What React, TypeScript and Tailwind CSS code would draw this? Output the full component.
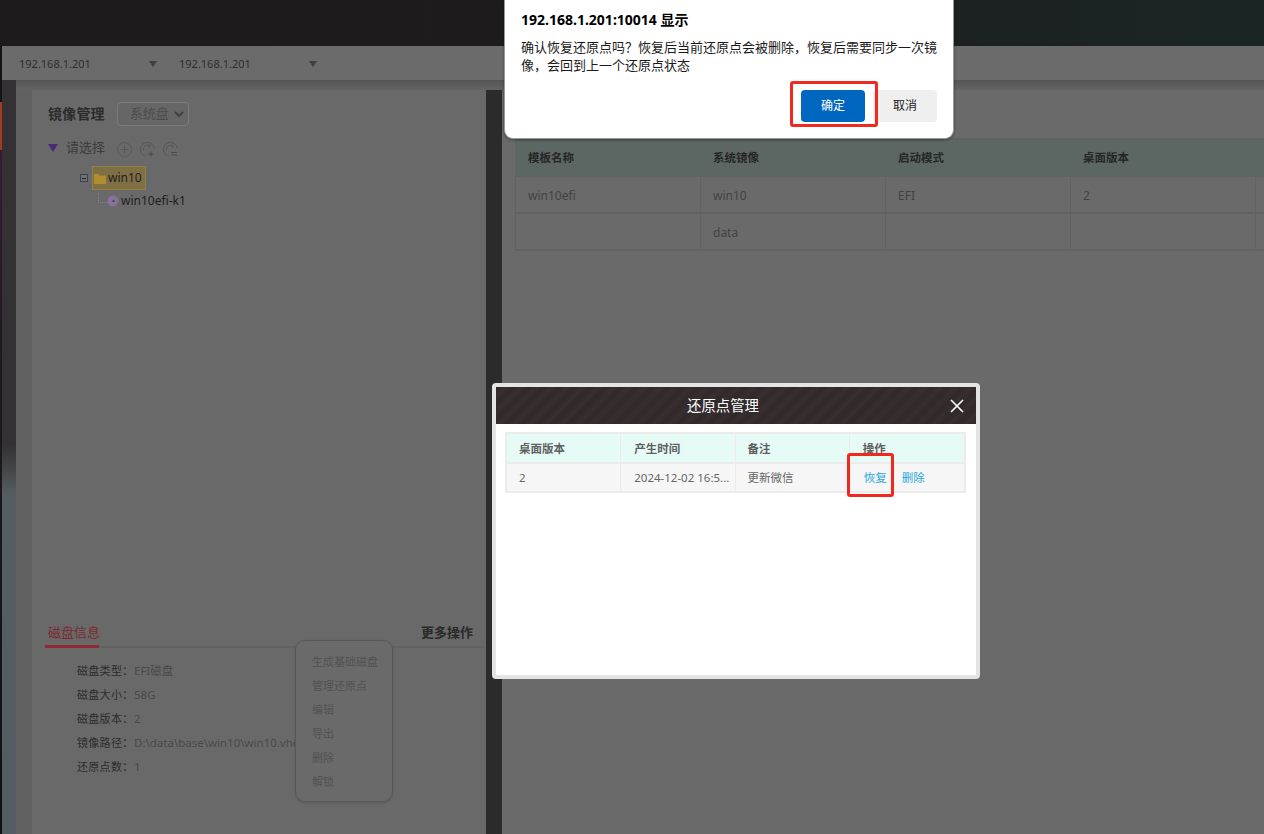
import React from 'react';

const cjk = "font-['Noto_Sans','Noto_Sans_CJK_SC',sans-serif]";

const CircleIcon = ({ kind }: { kind: 'plus' | 'addcopy' | 'sync' }) => (
  <svg width="15" height="15" viewBox="0 0 15 15" fill="none" stroke="#585858" strokeWidth="1">
    {kind === 'plus' ? (
      <>
        <circle cx="7.500" cy="7.500" r="7" />
        <path d="M7.500 3.500v8M3.500 7.500h8" />
      </>
    ) : (
      <>
        <path d="M14.300 6.500A7 7 0 1 0 5.500 14.200" />
        <path d="M9 3.500A4.300 4.300 0 0 0 3.500 8.500" />
        <path d="M9 2.500l1.500 2-2.300 1" />
        {kind === 'addcopy' ? (
          <path d="M11 9.500v5M8.500 12h5" stroke="#4a4a4a" />
        ) : (
          <path d="M8 10.500h6M8 13h6" stroke="#4a4a4a" />
        )}
      </>
    )}
  </svg>
);

const FolderIcon = () => (
  <svg width="12" height="11" viewBox="0 0 12 11" className="shrink-0">
    <path d="M0 1h4.500l1 1.500H12V11H0z" fill="#b08c30" />
  </svg>
);

const DiskIcon = () => (
  <svg width="12" height="12" viewBox="0 0 12 12" className="shrink-0">
    <circle cx="6" cy="6" r="5.500" fill="#8a6fa0" />
    <path d="M6 .5A5.500 5.500 0 0 1 11.500 6H6z" fill="#7f7590" />
    <circle cx="6.500" cy="6" r="2.600" fill="#807c8c" />
    <circle cx="6.500" cy="6" r="1.200" fill="#4a4a4a" />
  </svg>
);

const infoRows = [
  ['磁盘类型：', 'EFI磁盘'],
  ['磁盘大小：', '58G'],
  ['磁盘版本：', '2'],
  ['镜像路径：', 'D:\\data\\base\\win10\\win10.vhd'],
  ['还原点数：', '1'],
];

const menuItems = ['生成基础磁盘', '管理还原点', '编辑', '导出', '删除', '解锁'];

const LeftPanel = () => (
  <div className="w-[454px] bg-[#696969] flex flex-col">
    <div className="flex items-center h-[24px] mt-3 pl-4">
      <span className="text-[14px] tracking-[0.2px] font-bold text-[#2c2c2c] leading-none">镜像管理</span>
      <div className="ml-3 w-[72px] h-[24px] border border-[#7c7c7c] rounded-sm bg-[#666666] flex items-center pl-3 gap-[5px]">
        <span className="text-[13px] text-[#4c4c4c]">系统盘</span>
        <svg width="10" height="6" viewBox="0 0 10 6" fill="none" stroke="#3f3f3f" strokeWidth="1.800">
          <path d="M1 1l4 4 4-4" />
        </svg>
      </div>
    </div>
    <div className="flex items-center h-[24px] mt-[10px] pl-4">
      <span className="w-0 h-0 border-x-[5.500px] border-x-transparent border-t-[8px] border-t-[#4a2a78]" />
      <span className="ml-[8px] text-[13px] text-[#3c3c3c]">请选择</span>
      <div className="flex items-center gap-[8px] ml-[12px] mt-[2px]">
        <CircleIcon kind="plus" />
        <CircleIcon kind="addcopy" />
        <CircleIcon kind="sync" />
      </div>
    </div>
    <div className="flex items-center h-[24px] mt-[6px] pl-[48px]">
      <span className="w-[8px] h-[8px] border border-[#39424f] bg-[#6f7278] flex items-center justify-center">
        <span className="block w-[4px] h-px bg-[#222222]" />
      </span>
      <div className="ml-[4px] w-[54px] h-[24px] bg-[#7f6f45] border border-[#96803f] flex items-center gap-[2px] pl-[1px]">
        <FolderIcon />
        <span className="text-[12px] text-[#1e1e1e]">win10</span>
      </div>
    </div>
    <div className="flex items-center h-[22px] pl-[66px]">
      <span className="w-[9px] h-[10px] border-l border-b border-dotted border-[#808080] mb-[6px]" />
      <DiskIcon />
      <span className="ml-[2px] text-[12px] text-[#1e1e1e]">win10efi-k1</span>
    </div>

    <div className="mt-auto h-[214px] relative">
      <div className="flex justify-between items-start h-[28px] border-b-[2px] border-[#626262] ml-[13px] mr-[2px]">
        <span className="relative w-[54px] h-[26px] pl-[3px] text-[13px] text-[#7d2a32] leading-[24px] whitespace-nowrap">
          磁盘信息
          <span className="absolute left-0 right-0 -bottom-[2px] h-[3px] bg-[#8d2a35]" />
        </span>
        <span className="text-[13px] font-bold text-[#2a2a2a] leading-[24px] mr-[11px]">更多操作</span>
      </div>
      <div className="flex flex-col pl-[45px] pt-[11px]">
        {infoRows.map(([label, value]) => (
          <div key={label} className="flex items-center h-[24px]">
            <span className="w-[57px] shrink-0 text-[11px] tracking-[0.3px] text-[#2c2c2c] whitespace-nowrap">{label}</span>
            <span className="text-[11.500px] text-[#494949] whitespace-nowrap">{value}</span>
          </div>
        ))}
      </div>
      <div className="absolute left-[263px] top-[20px] w-[98px] h-[162px] rounded-[10px] border border-[#585858] bg-[#6a6a6a] pl-[16px] pt-[9px] shadow-sm">
        {menuItems.map((item) => (
          <div key={item} className="h-[24px] flex items-center text-[11px] text-[#525252] whitespace-nowrap">
            {item}
          </div>
        ))}
      </div>
    </div>
  </div>
);

const templateRows = [
  ['win10efi', 'win10', 'EFI', '2'],
  ['', 'data', '', ''],
];

const RightPanel = () => (
  <div className="flex-1 bg-[#6a6a6a] pl-[13px] pt-[48px]">
    <div className="border-t border-[#626262]">
      <div className="flex h-[38px] bg-[#5c6663] border-b border-[#626262] text-[11.500px] font-bold text-[#262626]">
        {['模板名称', '系统镜像', '启动模式', '桌面版本'].map((head) => (
          <div key={head} className="w-[185px] shrink-0 pl-[13px] flex items-center">
            {head}
          </div>
        ))}
      </div>
      {templateRows.map((row, i) => (
        <div key={i} className="flex h-[37px] border-b-[2px] border-[#626262] border-l text-[12px] text-[#424242]">
          {row.map((cell, j) => (
            <div key={j} className="w-[185px] shrink-0 pl-[12px] pt-[2px] flex items-center border-r border-[#626262]">
              {cell}
            </div>
          ))}
        </div>
      ))}
    </div>
  </div>
);

const RestoreModal = () => (
  <div className="absolute left-[492px] top-[383px] w-[488px] h-[296px] bg-white border-4 border-[#e4e4e4] rounded-[4px] overflow-hidden">
    <div className="h-[37px] flex items-center justify-center relative pr-[26px] bg-[#332b2d] bg-[repeating-linear-gradient(135deg,#302829_0px,#342b2d_4px,#372e30_6px,#312a2b_11px)]">
      <span className="text-[14.400px] text-white">还原点管理</span>
      <svg className="absolute right-[12px] top-[12px]" width="14" height="14" viewBox="0 0 14 14" stroke="#ffffff" strokeWidth="1.700">
        <path d="M1 1l12 12M13 1L1 13" />
      </svg>
    </div>
    <div className="ml-[9px] w-[461px] mt-[8px] border-2 border-[#ebebeb]">
      <div className="flex h-[30px] border-b-[2px] border-[#ebebeb] bg-[#e6fbf6] text-[11.500px] font-bold text-[#5f5f5f]">
        <div className="w-[115px] pl-[12px] pt-[1px] flex items-center border-r border-[#ebebeb]">桌面版本</div>
        <div className="w-[115px] pl-[13px] pt-[1px] flex items-center border-r border-[#ebebeb]">产生时间</div>
        <div className="w-[115px] pl-[12px] pt-[1px] flex items-center border-r border-[#ebebeb]">备注</div>
        <div className="w-[115px] pl-[13px] pt-[1px] flex items-center">操作</div>
      </div>
      <div className="flex h-[27px] bg-[#f6f6f6] text-[11.500px] text-[#666666]">
        <div className="w-[115px] pl-[12px] flex items-center border-r border-[#ebebeb]">2</div>
        <div className="w-[115px] pl-[13px] flex items-center border-r border-[#ebebeb] whitespace-nowrap overflow-hidden">2024-12-02 16:5...</div>
        <div className="w-[115px] pl-[12px] flex items-center border-r border-[#ebebeb]">更新微信</div>
        <div className="w-[115px] pl-[14px] flex items-center gap-[15px] text-[#1fa8dc]">
          <span>恢复</span>
          <span>删除</span>
        </div>
      </div>
    </div>
  </div>
);

const ConfirmDialog = () => (
  <div className="absolute left-[504px] top-0 w-[450px] h-[139px] bg-white rounded-b-[9px] border-x border-b border-[#9a9a9a] shadow-[0_1px_3px_rgba(0,0,0,0.4)] pt-[10px] px-[16px] flex flex-col">
    <div className="text-[14px] font-bold text-black leading-[20px]">192.168.1.201:10014 显示</div>
    <div className="mt-[8px] text-[13px] text-[#1a1a1a] leading-[18px]">
      确认恢复还原点吗？恢复后当前还原点会被删除，恢复后需要同步一次镜像，会回到上一个还原点状态
    </div>
    <div className="flex justify-end gap-[8px] mt-[16px]">
      <button className="w-[64px] h-[32px] bg-[#0067c0] rounded-[4px] text-[12px] text-white">确定</button>
      <button className="w-[64px] h-[32px] bg-[#efefef] rounded-[4px] text-[12px] text-[#1a1a1a]">取消</button>
    </div>
  </div>
);

const ServerSelect = () => (
  <div className="w-[160px] pl-[17px] pr-[5px] pt-[2px] flex items-center justify-between">
    <span>192.168.1.201</span>
    <span className="w-0 h-0 border-x-[4px] border-x-transparent border-t-[6px] border-t-[#404040]" />
  </div>
);

const App = () => (
  <div className={`relative w-[1264px] h-[834px] overflow-hidden bg-[#6a6a6a] ${cjk}`}>
    <div className="h-[46px] bg-gradient-to-r from-[#1f1b1c] via-[#1d1c1d] to-[#1b2526]" />
    <div className="flex h-[34px]">
      <div className="w-[2px] bg-[#141416]" />
      <div className="flex-1 bg-[#6b6b6b] flex items-center text-[11px] text-[#2e2e2e]">
        <ServerSelect />
        <ServerSelect />
      </div>
    </div>
    <div className="flex h-[754px]">
      <div className="w-[2px] bg-[linear-gradient(to_bottom,#141416_0,#141416_22px,#a33a22_22px,#a33a22_70px,#3a1a30_70px,#1a1a20_294px,#111114_100%)]" />
      <div className="w-[14px] bg-[linear-gradient(to_bottom,#333133_0,#333133_365px,#565d62_415px,#565d62_100%)]" />
      <div className="flex-1 flex flex-col">
        <div className="h-[10px] bg-gradient-to-b from-[#555555] to-[#646464]" />
        <div className="flex-1 flex">
          <div className="w-[16px] bg-[#616161]" />
          <LeftPanel />
          <div className="w-[16px] bg-[#2b2b2b]" />
          <RightPanel />
        </div>
      </div>
    </div>

    <RestoreModal />
    <ConfirmDialog />

    {/* red markers drawn over the shot */}
    <div className="absolute left-[790px] top-[81px] w-[88px] h-[46px] border-[3px] border-[#f0281e] rounded-[3px]" />
    <div className="absolute left-[847px] top-[453px] w-[47px] h-[44px] border-[3px] border-[#f0281e] rounded-[3px]" />
  </div>
);

export default App;
